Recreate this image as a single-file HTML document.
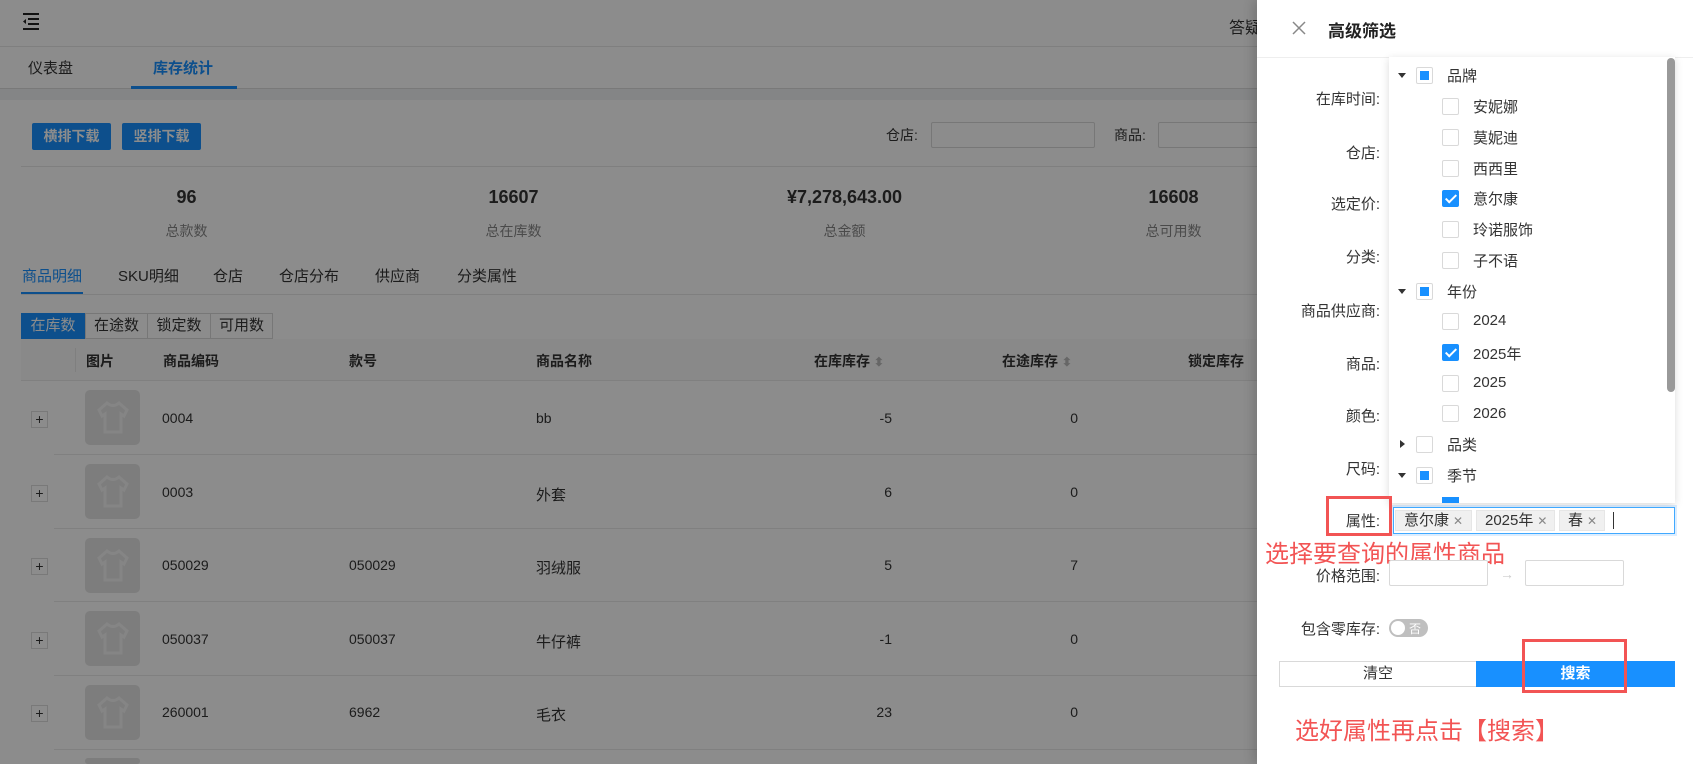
<!DOCTYPE html>
<html style="width:1693px;height:764px;overflow:hidden"><head><meta charset="utf-8"><style>
*{box-sizing:border-box;margin:0;padding:0}
body{width:1693px;height:764px;overflow:hidden;position:relative;background:#fff;font-family:"Liberation Sans","Noto Sans CJK SC",sans-serif;font-size:14px;color:#333}
#w{position:absolute;left:0;top:0;width:1693px;height:764px;overflow:hidden}
.a{position:absolute;white-space:nowrap}
.ov{position:absolute;left:0;top:0;width:1693px;height:764px;background:rgba(0,0,0,0.45)}
.btn{position:absolute;background:#1890ff;color:#fff;font-size:14px;text-align:center;line-height:27px;border-radius:2px}
.inp{position:absolute;border:1px solid #d9d9d9;background:#fff;border-radius:2px}
.num{font-size:18px;color:#333;text-align:center;width:329px;font-weight:bold}
.lab{font-size:14px;color:#888;text-align:center;width:329px}
.img{position:absolute;left:85px;width:55px;height:55px;border-radius:5px;background:#e4e4e4}
.img svg{position:absolute;left:8px;top:8px}
.plus{position:absolute;left:31px;width:17px;height:17px;border:1px solid #ddd;font-size:14px;line-height:14px;text-align:center;color:#333;background:#fff}
.rl{position:absolute;left:54px;width:1640px;height:1px;background:#eaeaea}
.fl{position:absolute;right:313px;font-size:15px;color:#333;text-align:right}
.cb{position:absolute;width:17px;height:17px;border:1px solid #d9d9d9;border-radius:2px;background:#fff}
.cb.ind::after{content:"";position:absolute;left:3px;top:3px;width:9px;height:9px;background:#1890ff}
.cb.on{background:#1890ff;border-color:#1890ff}
.cb.on::after{content:"";position:absolute;left:5px;top:1px;width:4px;height:9px;border:solid #fff;border-width:0 2px 2px 0;transform:rotate(45deg)}
.tl{position:absolute;font-size:15px;color:#333}
.car{position:absolute;left:1398px;width:0;height:0;border-left:4px solid transparent;border-right:4px solid transparent;border-top:5px solid #333}
.carr{position:absolute;left:1400px;width:0;height:0;border-top:4px solid transparent;border-bottom:4px solid transparent;border-left:5px solid #333}
.tag{position:absolute;top:510px;height:21px;background:#f0f0f0;border:1px solid #e6e6e6;font-size:15px;line-height:19px;padding-left:8px;color:#333}
.tag span{color:#888;font-size:12px;margin-left:4px}
</style></head><body><div id="w">
<div class="a" style="left:0;top:0;width:1693px;height:47px;background:#fff;border-bottom:1px solid #e8e8e8"></div>
<svg class="a" style="left:22px;top:12px" width="18" height="20"><rect x="1" y="1" width="16" height="2" fill="#222"/><rect x="6" y="6" width="11" height="2" fill="#222"/><rect x="6" y="11" width="11" height="2" fill="#222"/><rect x="1" y="16" width="16" height="2" fill="#222"/><path d="M1 9.5 L4 7 L4 12 Z" fill="#222"/></svg>
<div class="a" style="left:1229px;top:14px;font-size:16px">答疑</div>
<div class="a" style="left:0;top:47px;width:1693px;height:42px;background:#fff;border-bottom:1px solid #ddd"></div>
<div class="a" style="left:28px;top:57px;font-size:15px">仪表盘</div>
<div class="a" style="left:153px;top:57px;font-size:15px;color:#1890ff;font-weight:bold">库存统计</div>
<div class="a" style="left:131px;top:86px;width:106px;height:3px;background:#1890ff"></div>
<div class="a" style="left:0;top:89px;width:1693px;height:11px;background:#f0f2f5"></div>
<div class="btn" style="left:32px;top:123px;width:79px;font-weight:bold">横排下载</div>
<div class="btn" style="left:122px;top:123px;width:79px;font-weight:bold">竖排下载</div>
<div class="a" style="left:886px;top:125px;font-size:14px">仓店:</div>
<div class="inp" style="left:931px;top:122px;width:164px;height:26px"></div>
<div class="a" style="left:1114px;top:125px;font-size:14px">商品:</div>
<div class="inp" style="left:1158px;top:122px;width:120px;height:26px"></div>
<div class="a" style="left:21px;top:166px;width:1672px;height:1px;background:#e8e8e8"></div>
<div class="a num" style="left:22px;top:187px">96</div><div class="a lab" style="left:22px;top:221px">总款数</div>
<div class="a num" style="left:349px;top:187px">16607</div><div class="a lab" style="left:349px;top:221px">总在库数</div>
<div class="a num" style="left:680px;top:187px">¥7,278,643.00</div><div class="a lab" style="left:680px;top:221px">总金额</div>
<div class="a num" style="left:1009px;top:187px">16608</div><div class="a lab" style="left:1009px;top:221px">总可用数</div>
<div class="a" style="left:22px;top:265px;font-size:15px;color:#1890ff">商品明细</div>
<div class="a" style="left:118px;top:265px;font-size:15px">SKU明细</div>
<div class="a" style="left:213px;top:265px;font-size:15px">仓店</div>
<div class="a" style="left:279px;top:265px;font-size:15px">仓店分布</div>
<div class="a" style="left:375px;top:265px;font-size:15px">供应商</div>
<div class="a" style="left:457px;top:265px;font-size:15px">分类属性</div>
<div class="a" style="left:21px;top:294px;width:1672px;height:1px;background:#e8e8e8"></div>
<div class="a" style="left:21px;top:292px;width:62px;height:2px;background:#1890ff"></div>
<div class="a" style="left:21px;top:313px;width:64px;height:26px;background:#1890ff;color:#fff;text-align:center;line-height:26px;font-size:15px">在库数</div>
<div class="a" style="left:85px;top:313px;width:63px;height:26px;border:1px solid #d9d9d9;text-align:center;line-height:24px;font-size:15px">在途数</div>
<div class="a" style="left:147px;top:313px;width:64px;height:26px;border:1px solid #d9d9d9;text-align:center;line-height:24px;font-size:15px">锁定数</div>
<div class="a" style="left:210px;top:313px;width:63px;height:26px;border:1px solid #d9d9d9;text-align:center;line-height:24px;font-size:15px">可用数</div>
<div class="a" style="left:21px;top:339px;width:1672px;height:42px;background:#fafafa;border-bottom:1px solid #eaeaea"></div>
<div class="a" style="left:75px;top:348px;width:1px;height:24px;background:#e8e8e8"></div>
<div class="a" style="left:86px;top:351px;font-weight:bold">图片</div>
<div class="a" style="left:163px;top:351px;font-weight:bold">商品编码</div>
<div class="a" style="left:349px;top:351px;font-weight:bold">款号</div>
<div class="a" style="left:536px;top:351px;font-weight:bold">商品名称</div>
<div class="a" style="left:814px;top:351px;font-weight:bold">在库库存 <span style="color:#bbb;font-size:12px">⬍</span></div>
<div class="a" style="left:1002px;top:351px;font-weight:bold">在途库存 <span style="color:#bbb;font-size:12px">⬍</span></div>
<div class="a" style="left:1188px;top:351px;font-weight:bold">锁定库存</div>
<div class="rl" style="top:454px"></div><div class="rl" style="top:528px"></div><div class="rl" style="top:601px"></div><div class="rl" style="top:675px"></div><div class="rl" style="top:749px"></div>
<div class="img" style="top:390px"><svg width="40" height="40"><path d="M6 12 L14 5 Q20 10 26 5 L34 12 L31 18 L28 16 L28 34 L12 34 L12 16 L9 18 Z" fill="none" stroke="#f2f2f2" stroke-width="3"/></svg></div>
<div class="img" style="top:464px"><svg width="40" height="40"><path d="M6 12 L14 5 Q20 10 26 5 L34 12 L31 18 L28 16 L28 34 L12 34 L12 16 L9 18 Z" fill="none" stroke="#f2f2f2" stroke-width="3"/></svg></div>
<div class="img" style="top:538px"><svg width="40" height="40"><path d="M6 12 L14 5 Q20 10 26 5 L34 12 L31 18 L28 16 L28 34 L12 34 L12 16 L9 18 Z" fill="none" stroke="#f2f2f2" stroke-width="3"/></svg></div>
<div class="img" style="top:611px"><svg width="40" height="40"><path d="M6 12 L14 5 Q20 10 26 5 L34 12 L31 18 L28 16 L28 34 L12 34 L12 16 L9 18 Z" fill="none" stroke="#f2f2f2" stroke-width="3"/></svg></div>
<div class="img" style="top:685px"><svg width="40" height="40"><path d="M6 12 L14 5 Q20 10 26 5 L34 12 L31 18 L28 16 L28 34 L12 34 L12 16 L9 18 Z" fill="none" stroke="#f2f2f2" stroke-width="3"/></svg></div>
<div class="img" style="top:758px;height:6px"></div>
<div class="plus" style="top:411px">+</div><div class="plus" style="top:485px">+</div><div class="plus" style="top:558px">+</div><div class="plus" style="top:632px">+</div><div class="plus" style="top:705px">+</div>
<div class="a" style="left:162px;top:410px">0004</div><div class="a" style="left:536px;top:410px">bb</div><div class="a" style="left:872px;top:410px;width:20px;text-align:right">-5</div><div class="a" style="left:1058px;top:410px;width:20px;text-align:right">0</div>
<div class="a" style="left:162px;top:484px">0003</div><div class="a" style="left:536px;top:484px;font-size:15px">外套</div><div class="a" style="left:872px;top:484px;width:20px;text-align:right">6</div><div class="a" style="left:1058px;top:484px;width:20px;text-align:right">0</div>
<div class="a" style="left:162px;top:557px">050029</div><div class="a" style="left:349px;top:557px">050029</div><div class="a" style="left:536px;top:557px;font-size:15px">羽绒服</div><div class="a" style="left:872px;top:557px;width:20px;text-align:right">5</div><div class="a" style="left:1058px;top:557px;width:20px;text-align:right">7</div>
<div class="a" style="left:162px;top:631px">050037</div><div class="a" style="left:349px;top:631px">050037</div><div class="a" style="left:536px;top:631px;font-size:15px">牛仔裤</div><div class="a" style="left:872px;top:631px;width:20px;text-align:right">-1</div><div class="a" style="left:1058px;top:631px;width:20px;text-align:right">0</div>
<div class="a" style="left:162px;top:704px">260001</div><div class="a" style="left:349px;top:704px">6962</div><div class="a" style="left:536px;top:704px;font-size:15px">毛衣</div><div class="a" style="left:872px;top:704px;width:20px;text-align:right">23</div><div class="a" style="left:1058px;top:704px;width:20px;text-align:right">0</div>
<div class="ov"></div>
<div class="a" style="left:1257px;top:0;width:436px;height:764px;background:#fff;box-shadow:-4px 0 10px rgba(0,0,0,0.15)"></div>
<div class="a" style="left:1257px;top:57px;width:436px;height:1px;background:#eee"></div>
<svg class="a" style="left:1292px;top:21px" width="14" height="14"><path d="M1 1L13 13M13 1L1 13" stroke="#888" stroke-width="1.5"/></svg>
<div class="a" style="left:1328px;top:17px;font-size:17px;color:#222;font-weight:bold">高级筛选</div>
<div class="fl" style="top:88px">在库时间:</div>
<div class="fl" style="top:142px">仓店:</div>
<div class="fl" style="top:193px">选定价:</div>
<div class="fl" style="top:246px">分类:</div>
<div class="fl" style="top:300px">商品供应商:</div>
<div class="fl" style="top:353px">商品:</div>
<div class="fl" style="top:405px">颜色:</div>
<div class="fl" style="top:458px">尺码:</div>
<div class="fl" style="top:510px">属性:</div>
<div class="a" style="left:1389px;top:57px;width:286px;height:446px;background:#fff;box-shadow:0 2px 8px rgba(0,0,0,0.15)"></div>
<div class="a" style="left:1667px;top:58px;width:8px;height:334px;background:#999;border-radius:4px"></div>
<div class="car" style="top:73px"></div><div class="cb ind" style="left:1416px;top:67px"></div><div class="tl" style="left:1447px;top:65px">品牌</div>
<div class="cb" style="left:1442px;top:98px"></div><div class="tl" style="left:1473px;top:96px">安妮娜</div>
<div class="cb" style="left:1442px;top:129px"></div><div class="tl" style="left:1473px;top:127px">莫妮迪</div>
<div class="cb" style="left:1442px;top:160px"></div><div class="tl" style="left:1473px;top:158px">西西里</div>
<div class="cb on" style="left:1442px;top:190px"></div><div class="tl" style="left:1473px;top:188px">意尔康</div>
<div class="cb" style="left:1442px;top:221px"></div><div class="tl" style="left:1473px;top:219px">玲诺服饰</div>
<div class="cb" style="left:1442px;top:252px"></div><div class="tl" style="left:1473px;top:250px">子不语</div>
<div class="car" style="top:289px"></div><div class="cb ind" style="left:1416px;top:283px"></div><div class="tl" style="left:1447px;top:281px">年份</div>
<div class="cb" style="left:1442px;top:313px"></div><div class="tl" style="left:1473px;top:312px">2024</div>
<div class="cb on" style="left:1442px;top:344px"></div><div class="tl" style="left:1473px;top:343px">2025年</div>
<div class="cb" style="left:1442px;top:375px"></div><div class="tl" style="left:1473px;top:374px">2025</div>
<div class="cb" style="left:1442px;top:405px"></div><div class="tl" style="left:1473px;top:405px">2026</div>
<div class="carr" style="top:440px"></div><div class="cb" style="left:1416px;top:436px"></div><div class="tl" style="left:1447px;top:434px">品类</div>
<div class="car" style="top:473px"></div><div class="cb ind" style="left:1416px;top:467px"></div><div class="tl" style="left:1447px;top:465px">季节</div>
<div class="a" style="left:1442px;top:497px;width:17px;height:6px;background:#1890ff"></div>
<div class="a" style="left:1393px;top:507px;width:282px;height:27px;border:1px solid #40a9ff;box-shadow:0 0 0 2px rgba(24,144,255,0.15);background:#fff"></div>
<div class="tag" style="left:1395px;width:77px">意尔康<span>✕</span></div>
<div class="tag" style="left:1476px;width:79px">2025年<span>✕</span></div>
<div class="tag" style="left:1559px;width:46px">春<span>✕</span></div>
<div class="a" style="left:1613px;top:512px;width:1px;height:17px;background:#333"></div>
<div class="a" style="left:1326px;top:496px;width:66px;height:40px;border:3px solid #f25454"></div>
<div class="a" style="left:1265px;top:534px;font-size:24px;color:#f25454">选择要查询的属性商品</div>
<div class="fl" style="top:565px">价格范围:</div>
<div class="inp" style="left:1389px;top:560px;width:99px;height:26px"></div>
<div class="a" style="left:1500px;top:566px;color:#ccc">→</div>
<div class="inp" style="left:1525px;top:560px;width:99px;height:26px"></div>
<div class="fl" style="top:618px">包含零库存:</div>
<div class="a" style="left:1389px;top:619px;width:39px;height:18px;border-radius:9px;background:#bfbfbf"></div>
<div class="a" style="left:1391px;top:621px;width:14px;height:14px;border-radius:7px;background:#fff"></div>
<div class="a" style="left:1409px;top:620px;font-size:12px;color:#fff">否</div>
<div class="a" style="left:1279px;top:661px;width:198px;height:26px;border:1px solid #d9d9d9;text-align:center;line-height:24px;font-size:15px">清空</div>
<div class="a" style="left:1476px;top:661px;width:199px;height:26px;background:#1890ff;color:#fff;text-align:center;line-height:26px;font-size:15px;font-weight:bold">搜索</div>
<div class="a" style="left:1522px;top:639px;width:105px;height:54px;border:3px solid #f25454"></div>
<div class="a" style="left:1295px;top:711px;font-size:24px;color:#f25454">选好属性再点击【搜索】</div>
</div></body></html>
